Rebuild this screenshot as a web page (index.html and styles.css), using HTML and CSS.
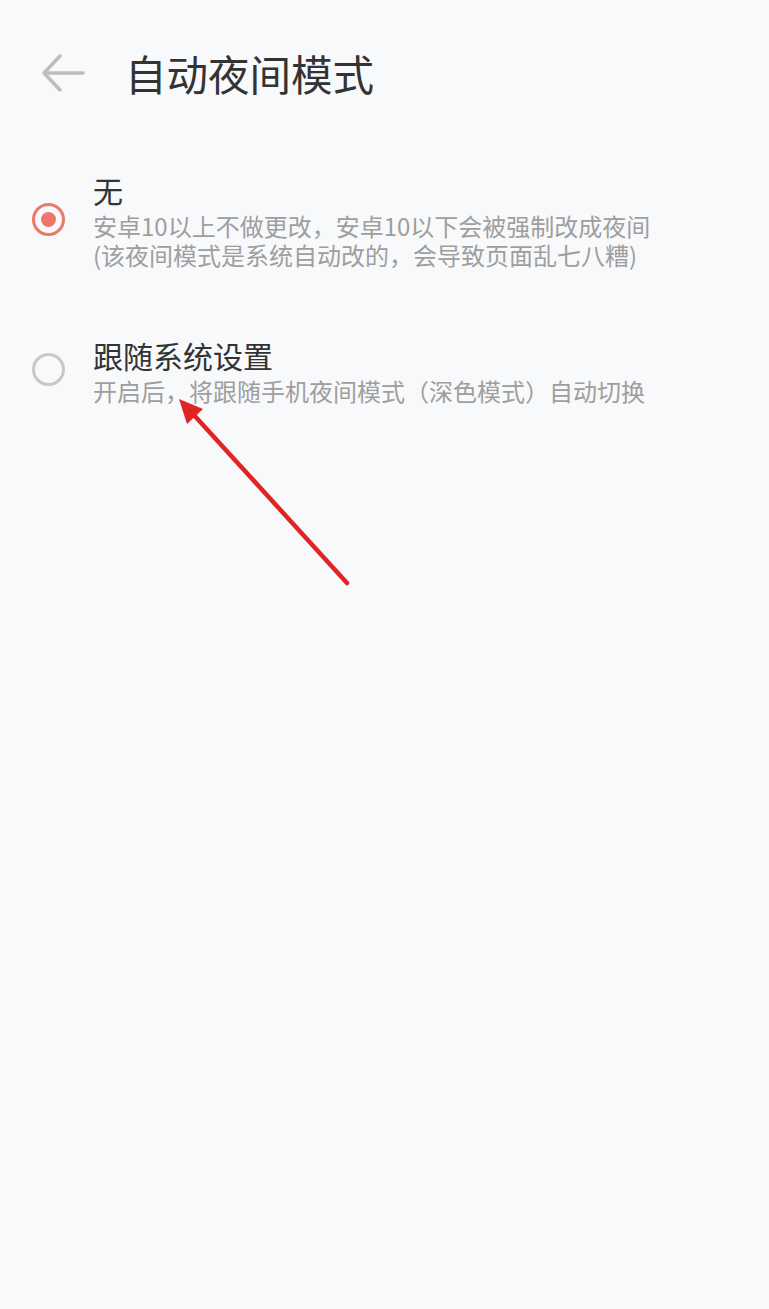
FILE: index.html
```html
<!DOCTYPE html>
<html lang="zh-CN">
<head>
    <meta charset="UTF-8">
    <meta name="viewport" content="width=device-width, initial-scale=1.0">
    <title>自动夜间模式</title>
    <link rel="stylesheet" href="styles.css">
</head>
<body>
    <div class="page">
        <header class="top-bar">
            <span class="back-btn">
                <svg width="44" height="38" viewBox="0 0 44 38">
                    <path d="M42 19H4M19 2L3 19l16 17" fill="none" stroke="#bdbdbd" stroke-width="3.5" stroke-linecap="round" stroke-linejoin="round"/>
                </svg>
            </span>
            <h1>自动夜间模式</h1>
        </header>

        <div class="option-list">
            <div class="option">
                <span class="radio checked"></span>
                <div class="option-text">
                    <div class="option-title">无</div>
                    <div class="option-desc">安卓10以上不做更改，安卓10以下会被强制改成夜间<br>(该夜间模式是系统自动改的，会导致页面乱七八糟)</div>
                </div>
            </div>
            <div class="option">
                <span class="radio"></span>
                <div class="option-text">
                    <div class="option-title">跟随系统设置</div>
                    <div class="option-desc">开启后，将跟随手机夜间模式（深色模式）自动切换</div>
                </div>
            </div>
        </div>

        <!-- 标注箭头 -->
        <svg class="mark-arrow" width="769" height="1309" viewBox="0 0 769 1309">
            <line x1="347" y1="583" x2="193" y2="414" stroke="#e02424" stroke-width="4.5" stroke-linecap="round"/>
            <polygon points="179,399 203,409 187,424" fill="#e02424"/>
        </svg>
    </div>
</body>
</html>
```

FILE: styles.css
```css
body {
    margin: 0;
    background-color: #f8f9fb;
    font-family: "Noto Sans CJK SC", "Noto Sans", sans-serif;
}
.page {
    position: relative;
    width: 769px;
    height: 1309px;
    overflow: hidden;
}
.top-bar {
    display: flex;
    align-items: center;
    height: 146px;
    padding-left: 41px;
}
.back-btn {
    display: flex;
    width: 44px;
    height: 38px;
    margin-right: 40px;
}
h1 {
    margin: 0;
    font-size: 41.5px;
    font-weight: normal;
    color: #333;
    line-height: 50px;
}
.option {
    display: flex;
    align-items: center;
    padding: 23px 0 42px 32px;
}
.radio {
    flex-shrink: 0;
    box-sizing: border-box;
    width: 33px;
    height: 33px;
    border: 3px solid #c8c8c8;
    border-radius: 50%;
    margin-right: 28px;
    display: flex;
    align-items: center;
    justify-content: center;
}
.radio.checked {
    border-color: #ec786c;
}
.radio.checked::after {
    content: "";
    width: 15px;
    height: 15px;
    border-radius: 50%;
    background-color: #ec786c;
}
.option-title {
    font-size: 30px;
    line-height: 42px;
    color: #333;
}
.option-desc {
    font-size: 24px;
    line-height: 29px;
    color: #9e9e9e;
}
.mark-arrow {
    position: absolute;
    top: 0;
    left: 0;
    pointer-events: none;
}
```
